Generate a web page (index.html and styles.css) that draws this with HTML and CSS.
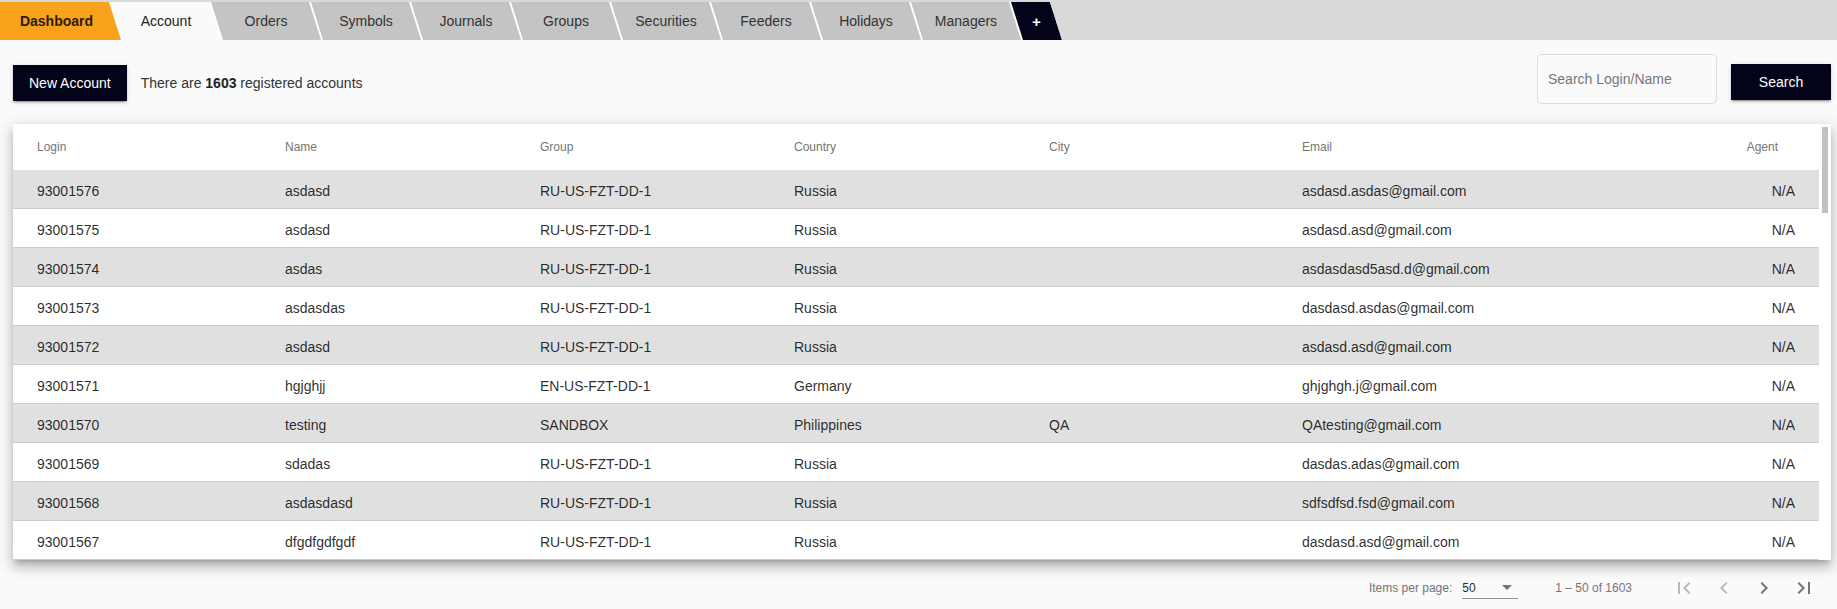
FILE: index.html
```html
<!DOCTYPE html>
<html lang="en">
<head>
<meta charset="utf-8">
<title>Accounts</title>
<link rel="stylesheet" href="styles.css">
</head>
<body>
<nav class="tabbar">
  <div class="tabs">
    <div class="tab tab-dashboard">Dashboard</div>
    <div class="tab tab-active">Account</div>
    <div class="tab">Orders</div>
    <div class="tab">Symbols</div>
    <div class="tab">Journals</div>
    <div class="tab">Groups</div>
    <div class="tab">Securities</div>
    <div class="tab">Feeders</div>
    <div class="tab">Holidays</div>
    <div class="tab">Managers</div>
    <div class="tab tab-add">+</div>
  </div>
</nav>

<section class="toolbar">
  <div class="toolbar-left">
    <button class="btn">New Account</button>
    <span class="count">There are <b>1603</b> registered accounts</span>
  </div>
  <div class="toolbar-right">
    <input class="search-input" type="text" placeholder="Search Login/Name">
    <button class="btn btn-search">Search</button>
  </div>
</section>

<div class="card">
  <div class="table-wrap">
    <table class="grid">
      <colgroup>
        <col class="c-login"><col class="c-name"><col class="c-group"><col class="c-country"><col class="c-city"><col class="c-email"><col class="c-agent">
      </colgroup>
      <thead>
        <tr><th>Login</th><th>Name</th><th>Group</th><th>Country</th><th>City</th><th>Email</th><th class="agent">Agent</th></tr>
      </thead>
      <tbody>
        <tr><td>93001576</td><td>asdasd</td><td>RU-US-FZT-DD-1</td><td>Russia</td><td></td><td>asdasd.asdas@gmail.com</td><td class="agent">N/A</td></tr>
        <tr><td>93001575</td><td>asdasd</td><td>RU-US-FZT-DD-1</td><td>Russia</td><td></td><td>asdasd.asd@gmail.com</td><td class="agent">N/A</td></tr>
        <tr><td>93001574</td><td>asdas</td><td>RU-US-FZT-DD-1</td><td>Russia</td><td></td><td>asdasdasd5asd.d@gmail.com</td><td class="agent">N/A</td></tr>
        <tr><td>93001573</td><td>asdasdas</td><td>RU-US-FZT-DD-1</td><td>Russia</td><td></td><td>dasdasd.asdas@gmail.com</td><td class="agent">N/A</td></tr>
        <tr><td>93001572</td><td>asdasd</td><td>RU-US-FZT-DD-1</td><td>Russia</td><td></td><td>asdasd.asd@gmail.com</td><td class="agent">N/A</td></tr>
        <tr><td>93001571</td><td>hgjghjj</td><td>EN-US-FZT-DD-1</td><td>Germany</td><td></td><td>ghjghgh.j@gmail.com</td><td class="agent">N/A</td></tr>
        <tr><td>93001570</td><td>testing</td><td>SANDBOX</td><td>Philippines</td><td>QA</td><td>QAtesting@gmail.com</td><td class="agent">N/A</td></tr>
        <tr><td>93001569</td><td>sdadas</td><td>RU-US-FZT-DD-1</td><td>Russia</td><td></td><td>dasdas.adas@gmail.com</td><td class="agent">N/A</td></tr>
        <tr><td>93001568</td><td>asdasdasd</td><td>RU-US-FZT-DD-1</td><td>Russia</td><td></td><td>sdfsdfsd.fsd@gmail.com</td><td class="agent">N/A</td></tr>
        <tr><td>93001567</td><td>dfgdfgdfgdf</td><td>RU-US-FZT-DD-1</td><td>Russia</td><td></td><td>dasdasd.asd@gmail.com</td><td class="agent">N/A</td></tr>
      </tbody>
    </table>
  </div>
  <div class="scrollbar"><div class="scroll-thumb"></div></div>
</div>

<footer class="paginator">
  <span class="pg-label">Items per page:</span>
  <div class="pg-select">
    <span class="pg-value">50</span>
    <span class="pg-arrow"></span>
  </div>
  <span class="pg-range">1 – 50 of 1603</span>
  <div class="pg-buttons">
    <button class="pg-btn" disabled aria-label="First page"><svg viewBox="0 0 24 24" width="24" height="24"><path d="M18.41 16.59L13.82 12l4.59-4.59L17 6l-6 6 6 6zM6 6h2v12H6z"/></svg></button>
    <button class="pg-btn" disabled aria-label="Previous page"><svg viewBox="0 0 24 24" width="24" height="24"><path d="M15.41 7.41L14 6l-6 6 6 6 1.41-1.41L10.83 12z"/></svg></button>
    <button class="pg-btn" aria-label="Next page"><svg viewBox="0 0 24 24" width="24" height="24"><path d="M10 6L8.59 7.41 13.17 12l-4.58 4.59L10 18l6-6z"/></svg></button>
    <button class="pg-btn" aria-label="Last page"><svg viewBox="0 0 24 24" width="24" height="24"><path d="M5.59 7.41L10.18 12l-4.59 4.59L7 18l6-6-6-6zM16 6h2v12h-2z"/></svg></button>
  </div>
</footer>
</body>
</html>
```

FILE: styles.css
```css
* { box-sizing: border-box; }

html, body {
  margin: 0;
  padding: 0;
  background: #fafafa;
  font-family: "Liberation Sans", Arial, sans-serif;
  color: rgba(0, 0, 0, 0.87);
  overflow: hidden;
}

/* ---------- tab bar ---------- */
.tabbar {
  height: 40px;
  padding-top: 2px;
  background: #d9d9d9;
  display: flex;
}

.tabs {
  display: flex;
  height: 38px;
  background: #ffffff;
  clip-path: polygon(0 0, calc(100% - 12px) 0, 100% 100%, 0 100%);
}

.tab {
  width: 110px;
  height: 38px;
  margin-left: -10px;
  display: flex;
  align-items: center;
  justify-content: center;
  font-size: 14px;
  color: #333;
  background: #c4c4c4;
  clip-path: polygon(0 0, calc(100% - 12px) 0, 100% 100%, 12px 100%);
}

.tab-dashboard {
  width: 121px;
  margin-left: 0;
  padding-right: 8px;
  background: #faa21b;
  color: #2a1c05;
  font-weight: bold;
  clip-path: polygon(0 0, calc(100% - 12px) 0, 100% 100%, 0 100%);
}

.tab-active {
  background: #fafafa;
  color: #222;
}

.tab-add {
  width: 51px;
  background: #03031a;
  color: #fff;
  font-weight: bold;
  font-size: 15px;
}

/* ---------- toolbar ---------- */
.toolbar {
  height: 84px;
  padding: 0 6px 0 13px;
  display: flex;
  justify-content: space-between;
  align-items: flex-start;
}

.toolbar-left {
  margin-top: 25px;
  display: flex;
  align-items: center;
  gap: 14px;
}

.btn {
  height: 36px;
  padding: 0 16px;
  border: none;
  border-radius: 0;
  background: #03031a;
  color: #fff;
  font-family: "Liberation Sans", Arial, sans-serif;
  font-size: 14px;
  box-shadow: 0 3px 1px -2px rgba(0,0,0,.2), 0 2px 2px 0 rgba(0,0,0,.14), 0 1px 5px 0 rgba(0,0,0,.12);
}

.count {
  font-size: 14px;
  color: #333;
}

.count b { color: #222; }

.toolbar-right {
  display: flex;
  align-items: flex-start;
  gap: 14px;
}

.search-input {
  margin-top: 14px;
  width: 180px;
  height: 50px;
  padding: 0 10px;
  border: 1px solid #dcdcdc;
  border-radius: 5px;
  background: #fafafa;
  font-family: "Liberation Sans", Arial, sans-serif;
  font-size: 14px;
  color: #333;
  outline: none;
}

.search-input::placeholder { color: #777; }

.btn-search {
  margin-top: 24px;
  width: 100px;
}

/* ---------- card / table ---------- */
.card {
  margin: 0 6px 0 13px;
  height: 436px;
  display: flex;
  background: #fff;
  box-shadow: 0 5px 5px -3px rgba(0,0,0,.2), 0 8px 10px 1px rgba(0,0,0,.14), 0 3px 14px 2px rgba(0,0,0,.12);
}

.table-wrap {
  flex: 1;
  overflow: hidden;
}

.scrollbar {
  width: 12px;
  padding: 3px;
  background: #fff;
}

.scroll-thumb {
  height: 86px;
  background: #c1c1c1;
}

.grid {
  width: 100%;
  table-layout: fixed;
  border-collapse: separate;
  border-spacing: 0;
}

.c-login { width: 272px; }
.c-name { width: 255px; }
.c-group { width: 254px; }
.c-country { width: 255px; }
.c-city { width: 253px; }
.c-email { width: 400px; }
.c-agent { width: 117px; }

.grid th {
  height: 46px;
  padding: 0;
  background: #fff;
  font-size: 12px;
  font-weight: normal;
  color: #757575;
  text-align: left;
}

.grid td {
  height: 39px;
  padding: 3px 0 0;
  font-size: 14px;
  color: rgba(0,0,0,.84);
  border-bottom: 1px solid #cfcfcf;
  white-space: nowrap;
}

.grid th:first-child,
.grid td:first-child { padding-left: 24px; }

.grid tbody tr:nth-child(odd) td { background: #e0e0e0; }

.grid th.agent { text-align: right; padding-right: 41px; }
.grid td.agent { text-align: right; padding-right: 24px; }

/* ---------- paginator ---------- */
.paginator {
  height: 56px;
  padding-right: 13px;
  display: flex;
  justify-content: flex-end;
  align-items: center;
  font-size: 12px;
  color: #757575;
}

.pg-label { margin-right: 10px; }

.pg-select {
  width: 56px;
  height: 22px;
  display: flex;
  align-items: center;
  justify-content: space-between;
  border-bottom: 1px solid #949494;
  padding-right: 6px;
}

.pg-value {
  font-size: 12px;
  color: rgba(0,0,0,.87);
}

.pg-arrow {
  width: 0;
  height: 0;
  border-left: 5px solid transparent;
  border-right: 5px solid transparent;
  border-top: 5px solid #757575;
}

.pg-range {
  margin-left: 37px;
  margin-right: 32px;
}

.pg-buttons { display: flex; }

.pg-btn {
  width: 40px;
  height: 40px;
  padding: 0;
  border: none;
  background: transparent;
  display: flex;
  align-items: center;
  justify-content: center;
  fill: rgba(0,0,0,.54);
}

.pg-btn:disabled { fill: rgba(0,0,0,.26); }
```
